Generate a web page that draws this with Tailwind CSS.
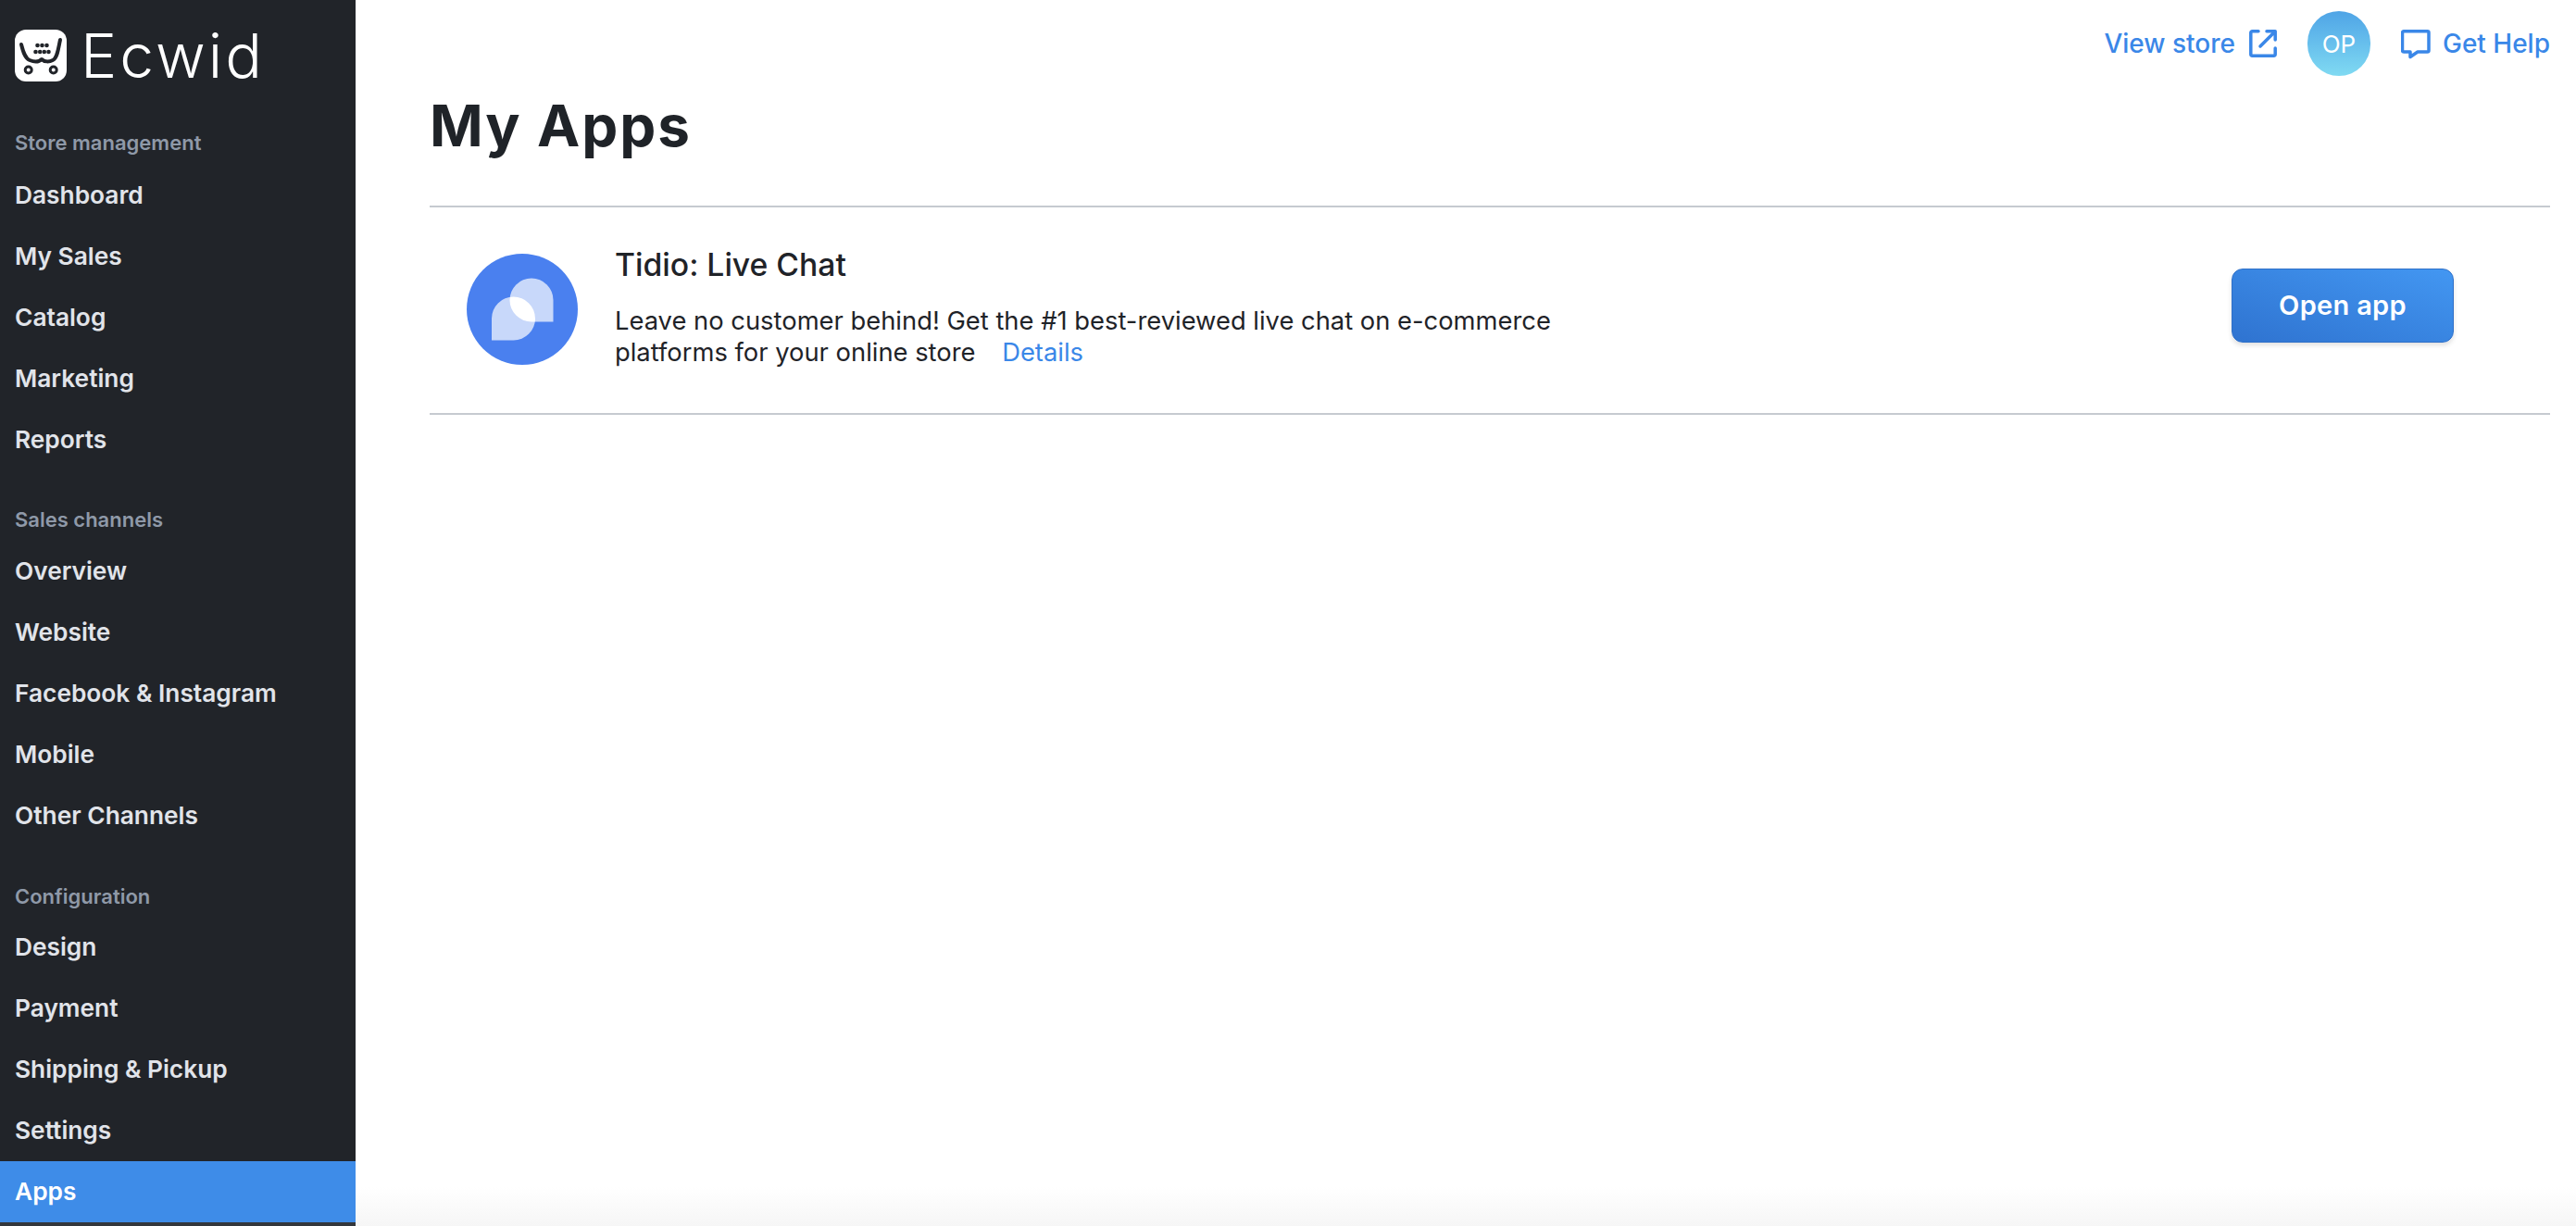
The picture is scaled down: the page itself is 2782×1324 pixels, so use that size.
<!DOCTYPE html>
<html lang="en">
  <head>
    <meta charset="UTF-8" />
    <title>My Apps</title>
    <script src="https://cdn.jsdelivr.net/npm/@tailwindcss/browser@4"></script>
  </head>
  <body class="h-[1324px] w-[2782px] overflow-hidden bg-white font-[Inter,sans-serif] flex">
    <aside class="w-[384px] h-full shrink-0 bg-[#212429] flex flex-col">
      <div class="h-[132px] shrink-0 flex items-start pl-[16px] pt-[32px] gap-[15px]">
        <svg class="w-[56px] h-[56px] shrink-0" viewBox="0 0 56 56">
          <rect width="56" height="56" rx="12" fill="#fff" />
          <path d="M7 16C9 24 11 31 16 33C21 35 26 35 29 32C32 35 37 35 41 33C46 31 47 20 49 11" fill="none" stroke="#212429" stroke-width="4" stroke-linecap="round" stroke-linejoin="round" />
          <g fill="#212429">
            <circle cx="24.5" cy="17" r="2.3" /><circle cx="29.5" cy="17" r="2.3" /><circle cx="34.5" cy="17" r="2.3" />
            <circle cx="22.5" cy="24" r="2.3" /><circle cx="27.2" cy="24" r="2.3" /><circle cx="31.8" cy="24" r="2.3" /><circle cx="36.5" cy="24" r="2.3" />
          </g>
          <circle cx="14.7" cy="43.5" r="3.5" fill="none" stroke="#212429" stroke-width="3" />
          <circle cx="41.7" cy="43.5" r="3.5" fill="none" stroke="#212429" stroke-width="3" />
        </svg>
        <span class="text-white text-[66px] leading-[56px] font-light tracking-[3px]">Ecwid</span>
      </div>

      <div class="h-[44px] flex items-center pl-[16px] text-[22px] font-semibold text-[#8f99a8]">Store management</div>
      <a class="h-[66px] flex items-center pl-[16px] pt-[3px] text-[26.3px] font-semibold text-[#e1e4ea]">Dashboard</a>
      <a class="h-[66px] flex items-center pl-[16px] pt-[3px] text-[26.3px] font-semibold text-[#e1e4ea]">My Sales</a>
      <a class="h-[66px] flex items-center pl-[16px] pt-[3px] text-[26.3px] font-semibold text-[#e1e4ea]">Catalog</a>
      <a class="h-[66px] flex items-center pl-[16px] pt-[3px] text-[26.3px] font-semibold text-[#e1e4ea]">Marketing</a>
      <a class="h-[66px] flex items-center pl-[16px] pt-[3px] text-[26.3px] font-semibold text-[#e1e4ea]">Reports</a>

      <div class="h-[44px] mt-[33px] flex items-center pl-[16px] pt-[1px] text-[22px] font-semibold text-[#8f99a8]">Sales channels</div>
      <a class="h-[66px] flex items-center pl-[16px] pt-[2px] text-[26.3px] font-semibold text-[#e1e4ea]">Overview</a>
      <a class="h-[66px] flex items-center pl-[16px] pt-[2px] text-[26.3px] font-semibold text-[#e1e4ea]">Website</a>
      <a class="h-[66px] flex items-center pl-[16px] pt-[2px] text-[26.3px] font-semibold text-[#e1e4ea]">Facebook &amp; Instagram</a>
      <a class="h-[66px] flex items-center pl-[16px] pt-[2px] text-[26.3px] font-semibold text-[#e1e4ea]">Mobile</a>
      <a class="h-[66px] flex items-center pl-[16px] pt-[2px] text-[26.3px] font-semibold text-[#e1e4ea]">Other Channels</a>

      <div class="h-[44px] mt-[33px] flex items-center pl-[16px] text-[22px] font-semibold text-[#8f99a8]">Configuration</div>
      <a class="h-[66px] flex items-center pl-[16px] text-[26.3px] font-semibold text-[#e1e4ea]">Design</a>
      <a class="h-[66px] flex items-center pl-[16px] text-[26.3px] font-semibold text-[#e1e4ea]">Payment</a>
      <a class="h-[66px] flex items-center pl-[16px] text-[26.3px] font-semibold text-[#e1e4ea]">Shipping &amp; Pickup</a>
      <a class="h-[66px] flex items-center pl-[16px] text-[26.3px] font-semibold text-[#e1e4ea]">Settings</a>
      <a class="h-[66px] flex items-center pl-[16px] text-[26.3px] font-semibold text-white bg-[#3e8ce8]">Apps</a>
      <div class="flex-1 bg-[#33373c]"></div>
    </aside>

    <main class="flex-1 h-full flex flex-col">
      <div class="pl-[80px] pr-[28px]">
        <div class="h-[94px] flex items-center justify-end text-[#3a87e8] text-[28px] font-medium">
          <span>View store</span>
          <svg class="w-[30px] h-[30px] ml-[15px]" viewBox="0 0 30 30" fill="none" stroke="#3a87e8" stroke-width="3.5" stroke-linecap="round" stroke-linejoin="round">
            <path d="M10 1.8H3.5a1.7 1.7 0 0 0-1.7 1.7v23a1.7 1.7 0 0 0 1.7 1.7h23a1.7 1.7 0 0 0 1.7-1.7V20" />
            <path d="M12 18 27 3M19 1.8h9.2V11" />
          </svg>
          <div class="w-[68px] h-[70px] rounded-full ml-[33px] mr-[1px] bg-linear-to-b from-[#4fa4e6] to-[#80daf2] flex items-center justify-center text-white text-[26px] font-normal">OP</div>
          <svg class="w-[32px] h-[32px] ml-[32px] mt-[2px]" viewBox="0 0 32 32" fill="none" stroke="#3a87e8" stroke-width="3.5" stroke-linejoin="round">
            <path d="M3 1.8h25.5a1.5 1.5 0 0 1 1.5 1.5v19.2a1.5 1.5 0 0 1-1.5 1.5H18l-8 5.5v-5.5H3a1.5 1.5 0 0 1-1.5-1.5V3.3A1.5 1.5 0 0 1 3 1.8z" />
          </svg>
          <span class="ml-[13px]">Get Help</span>
        </div>

        <h1 class="h-[82px] mb-[46px] flex items-center text-[62px] font-bold tracking-[1.9px] text-[#1f2328]">My Apps</h1>

        <div class="h-[226px] border-y-2 border-[#c6cad0] flex items-center pl-[40px] pr-[104px]">
          <svg class="w-[120px] h-[120px] shrink-0 mb-[2px]" viewBox="0 0 120 120">
            <defs>
              <clipPath id="back"><path d="M70 26.5a23.5 23.5 0 0 1 23.5 23.5v23.5H70a23.5 23.5 0 0 1 0-47z" /></clipPath>
            </defs>
            <circle cx="60" cy="60" r="60" fill="#4a80ef" />
            <path d="M70 26.5a23.5 23.5 0 0 1 23.5 23.5v23.5H70a23.5 23.5 0 0 1 0-47z" fill="#c8d8fa" />
            <path d="M50.5 46.5a23.5 23.5 0 0 1 0 47H27V70a23.5 23.5 0 0 1 23.5-23.5z" fill="#c8d8fa" />
            <path d="M50.5 46.5a23.5 23.5 0 0 1 0 47H27V70a23.5 23.5 0 0 1 23.5-23.5z" fill="#fff" clip-path="url(#back)" />
          </svg>
          <div class="ml-[40px] w-[1040px] pb-[6px] text-[#1f2328]">
            <h2 class="text-[33.7px] leading-[40px] font-medium mb-[24px]">Tidio: Live Chat</h2>
            <p class="text-[27.35px] leading-[34px]">Leave no customer behind! Get the #1 best-reviewed live chat on e-commerce platforms for your online store <a class="ml-[21px] text-[#3a87e8]">Details</a></p>
          </div>
          <button class="ml-auto mb-[10px] w-[240px] h-[80px] rounded-[12px] border border-[#2f70c8] bg-linear-to-tr from-[#2f73d0] to-[#4397f2] text-white text-[29px] font-semibold tracking-[0.3px] shadow-[0_3px_5px_rgba(0,0,0,0.12)]">Open app</button>
        </div>
      </div>
      <div class="mt-auto h-[42px] bg-linear-to-b from-white to-[#f6f6f6]"></div>
    </main>
  </body>
</html>
